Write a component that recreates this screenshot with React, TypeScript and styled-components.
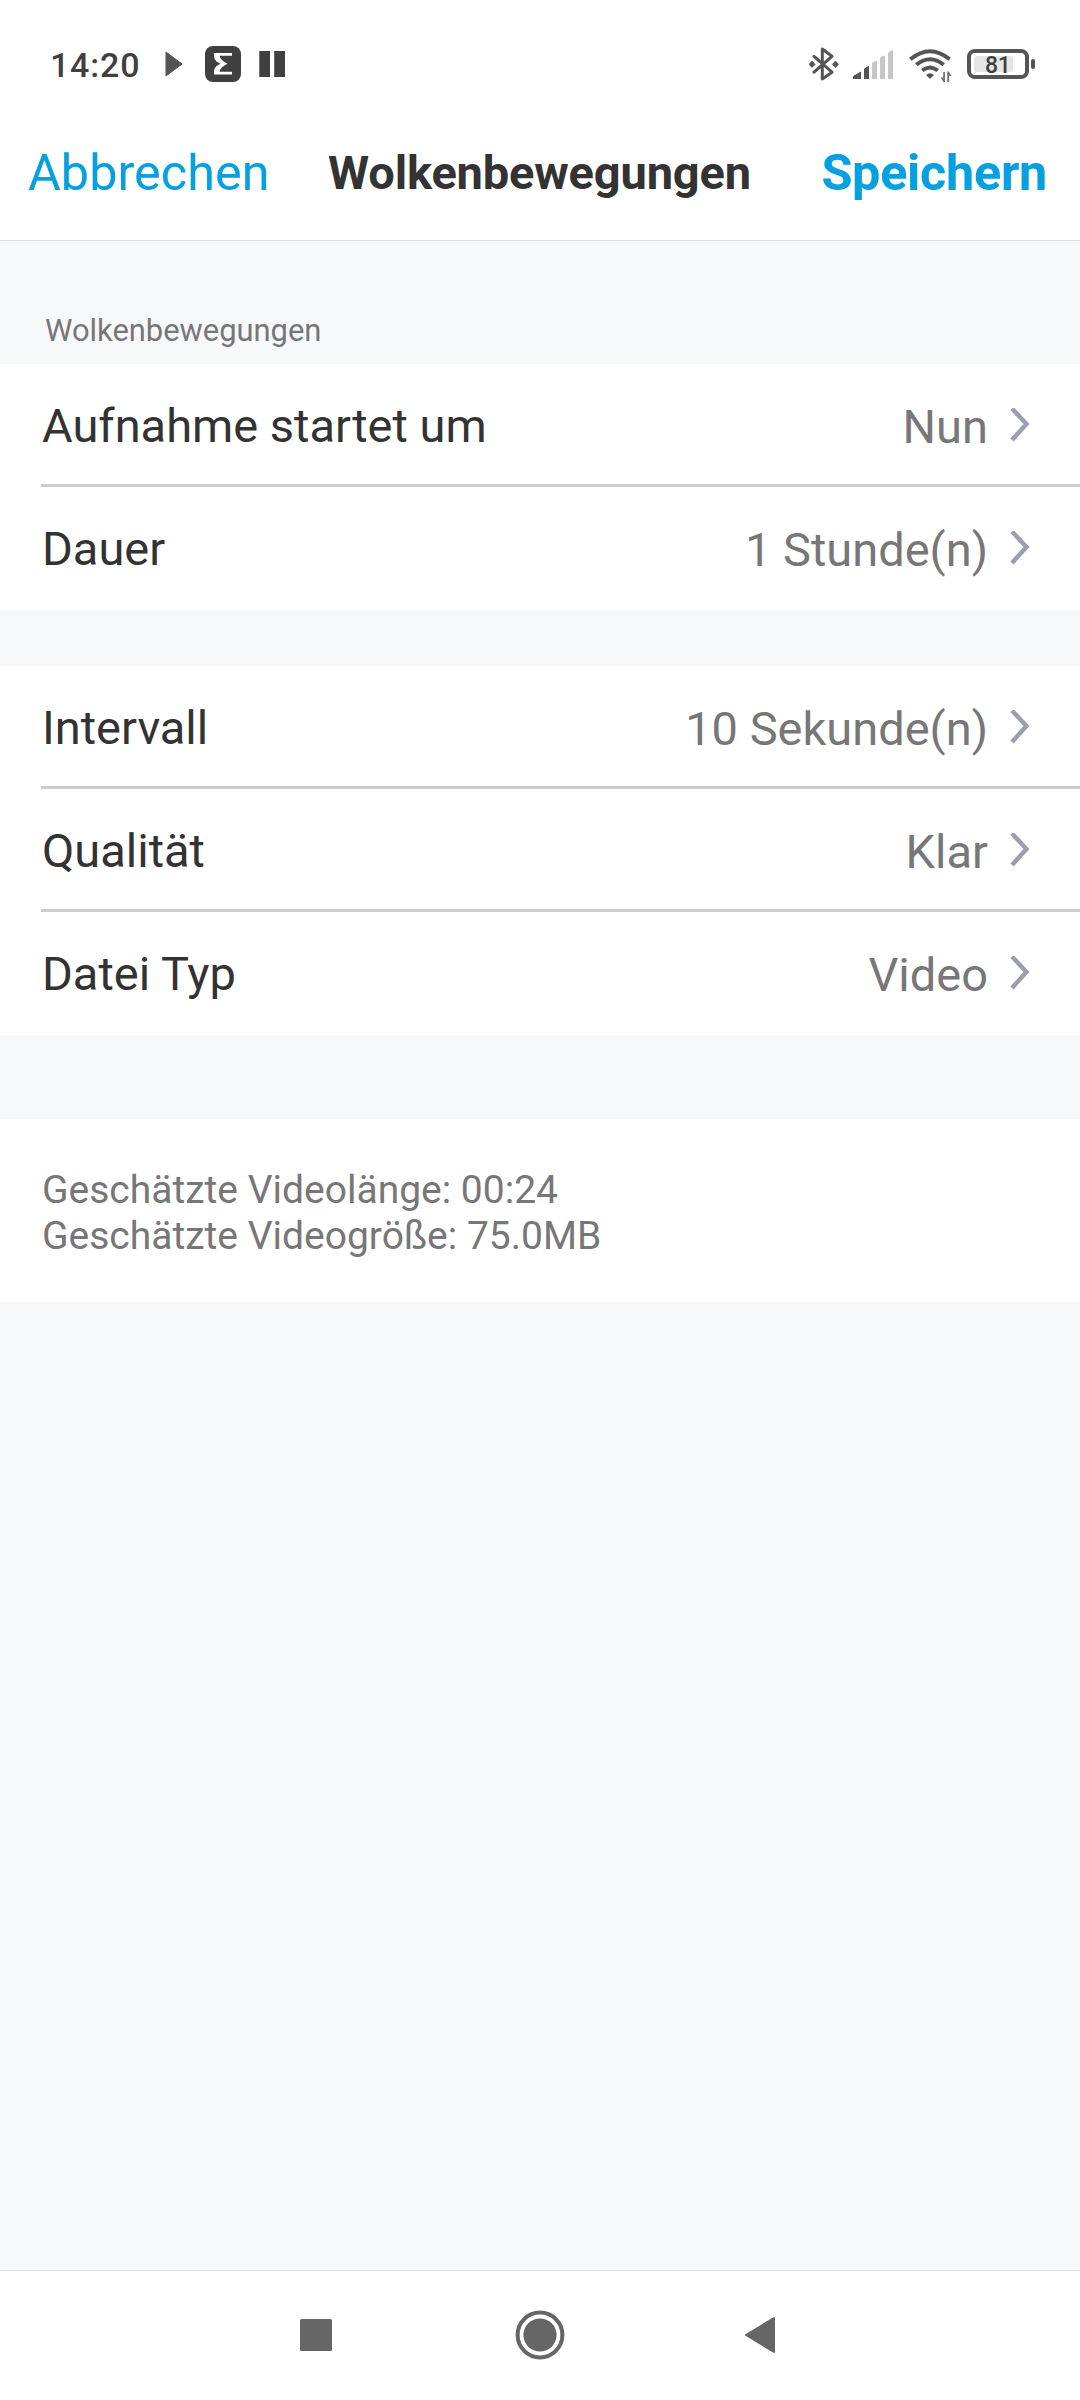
import React from "react";
import styled, { createGlobalStyle } from "styled-components";

const GlobalStyle = createGlobalStyle`
  * { box-sizing: border-box; }
  body { margin: 0; background: #f7f8fa; }
`;

const Screen = styled.div`
  width: 1080px;
  height: 2400px;
  display: flex;
  flex-direction: column;
  background: #f7f8fa;
  font-family: Roboto, "Liberation Sans", sans-serif;
  overflow: hidden;
`;

const StatusBar = styled.div`
  height: 107px;
  padding: 21px 45px 0 50px;
  display: flex;
  justify-content: space-between;
  align-items: center;
  background: #fff;
`;

const StatusGroup = styled.div`
  display: flex;
  align-items: center;
`;

const Clock = styled.span`
  width: 115px;
  font-size: 34px;
  line-height: 40px;
  font-weight: 500;
  letter-spacing: 0.8px;
  color: #404040;
  padding-top: 2px;
`;

const Icon = styled.svg<{ $gap?: number }>`
  display: block;
  flex: none;
  margin-left: ${(p) => p.$gap ?? 0}px;
`;

const TitleBar = styled.header`
  height: 134px;
  padding: 0 33px 2px 28px;
  display: grid;
  grid-template-columns: 1fr auto 1fr;
  align-items: center;
  background: #fff;
  border-bottom: 1px solid #dcdddf;
`;

const Action = styled.button<{ $strong?: boolean }>`
  border: 0;
  padding: 0;
  background: none;
  font-family: inherit;
  font-size: 50.4px;
  line-height: 60px;
  font-weight: ${(p) => (p.$strong ? 700 : 400)};
  letter-spacing: ${(p) => (p.$strong ? "-0.3px" : "0")};
  color: #069fe0;
  justify-self: ${(p) => (p.$strong ? "end" : "start")};
`;

const Title = styled.h1`
  margin: 0;
  padding-left: 4px;
  font-size: 47px;
  line-height: 60px;
  font-weight: 700;
  letter-spacing: -0.17px;
  color: #333;
`;

const SectionLabel = styled.h2`
  margin: 0;
  height: 123px;
  padding: 72px 0 0 45px;
  font-size: 30.9px;
  line-height: 36px;
  font-weight: 400;
  color: #777;
`;

const Group = styled.section<{ $gapAfter: number }>`
  background: #fff;
  margin-bottom: ${(p) => p.$gapAfter}px;
`;

const Row = styled.div`
  margin-left: 41px;
  height: 123px;
  padding: 4px 50px 0 1px;
  display: flex;
  align-items: center;
  border-bottom: 3px solid #ccc;
  &:last-child {
    border-bottom-color: transparent;
  }
`;

const Label = styled.span`
  flex: 1;
  font-size: 47px;
  line-height: 56px;
  color: #333;
`;

const Value = styled.span`
  font-size: 47px;
  line-height: 56px;
  padding-top: 2px;
  color: #777;
`;

const Estimate = styled.section`
  height: 183px;
  padding: 48px 42px 0;
  background: #fff;
  font-size: 39px;
  line-height: 46px;
  color: #777;
`;

const EstimateLine = styled.p`
  margin: 0;
`;

const NavBar = styled.nav`
  margin-top: auto;
  height: 130px;
  padding: 0 304px 1px 300px;
  display: flex;
  align-items: center;
  justify-content: space-between;
  background: #fff;
  border-top: 1px solid #dfe1e3;
`;

const Chevron = () => (
  <Icon width="20" height="36" viewBox="0 1 20 36" $gap={22}>
    <path d="M2 1.5 L16.5 17 L2 33" fill="none" stroke="#9a9eaf" strokeWidth="4.4" />
  </Icon>
);

const PlayIcon = () => (
  <Icon width="18" height="26" viewBox="0 0 18 26">
    <path d="M1 1 L17 13 L1 25 Z" fill="#555" stroke="#555" strokeLinejoin="round" />
  </Icon>
);

const SigmaIcon = () => (
  <Icon width="36" height="36" viewBox="0 0 36 36" $gap={22}>
    <rect width="36" height="36" rx="8" fill="#404040" />
    <path
      d="M9 7 H27 V9.8 H14.5 C15 13 18 15.5 22.5 17.8 C18 20 15 22.5 14.5 25.8 H27 V28.6 H9 V26 C9 22 11.5 19.5 15.5 17.8 C11.5 16 9 13.5 9 9.5 Z"
      fill="#fff"
    />
  </Icon>
);

const PauseIcon = () => (
  <Icon width="26" height="26" viewBox="0 0 26 26" $gap={18}>
    <path d="M0.3 0H11V26H0.3Z M15.2 0H26V26H15.2Z" fill="#404040" />
  </Icon>
);

const BluetoothIcon = () => (
  <Icon width="30" height="34" viewBox="0 0 30 34">
    <path
      d="M5 9.3 L23 25.2 L13.3 32 V2 L23 9.3 L5 25.2"
      fill="none"
      stroke="#555"
      strokeWidth="3"
      strokeLinecap="round"
      strokeLinejoin="round"
    />
    <path d="M3 14 L6 17.3 L3 20.5 L0 17.3Z M26.5 14 L29.5 17.3 L26.5 20.5 L23.5 17.3Z" fill="#555" stroke="#555" strokeWidth="0.8" />
  </Icon>
);

const SignalIcon = () => (
  <Icon width="40" height="29" viewBox="0 0 40 29" $gap={14}>
    <path d="M0 29V26.5Q0 26 1 25.4L8 21.6V29Z M11 29V19Q13 16.5 16 16V29Z" fill="#555" />
    <path d="M19 29V13Q21 11 24 10.8V29Z M27 29V8Q29 5.8 32 5.4V29Z M35 29V3Q37 0.5 40 0V29Z" fill="#c6c6c6" />
  </Icon>
);

const WifiIcon = () => (
  <Icon width="43" height="36" viewBox="0 -3 43 36" $gap={16}>
    <g fill="none" stroke="#555" strokeWidth="4">
      <path d="M1.3 10.3 Q21 -5.8 40.7 10.3" />
      <path d="M7.3 15.8 Q21 4.6 34.7 15.8" />
      <path d="M13.2 21.5 Q21 15.4 28.8 21.5" />
    </g>
    <path d="M17 26 Q21 22.4 25 26 L21 30Z" fill="#555" />
    <path d="M36 23 V33 H34.4 L31.6 28.6 H34.2 V23Z M38.2 33 V22.6 H39.8 L42.4 27 H40.2 V33Z" fill="#777" />
  </Icon>
);

const Battery = styled.div`
  width: 62px;
  height: 30px;
  margin-left: 15px;
  padding: 3px;
  border: 4px solid #555;
  border-radius: 8px;
`;

const BatteryLevel = styled.div`
  width: 39px;
  height: 16px;
  padding-left: 11px;
  border-radius: 2px;
  background: #e6e6e6;
  color: #404040;
  font-size: 23px;
  line-height: 19px;
  font-weight: 500;
  letter-spacing: -0.3px;
`;

const BatteryCap = styled.div`
  width: 4px;
  height: 10px;
  margin-left: 2px;
  border-radius: 2px;
  background: #555;
`;

const SquareIcon = () => (
  <Icon width="32" height="32" viewBox="0 0 32 32">
    <rect width="32" height="32" rx="1.5" fill="#666" />
  </Icon>
);

const HomeIcon = () => (
  <Icon width="50" height="50" viewBox="0 0 50 50" $gap={3}>
    <circle cx="25" cy="25" r="22.4" fill="none" stroke="#666" strokeWidth="4" />
    <circle cx="25" cy="25" r="16.6" fill="#666" />
  </Icon>
);

const BackIcon = () => (
  <Icon width="32" height="38" viewBox="0 0 32 38">
    <path d="M2 19 L30 2 V36 Z" fill="#666" stroke="#666" strokeWidth="2" strokeLinejoin="round" />
  </Icon>
);

const schedule = [
  { label: "Aufnahme startet um", value: "Nun" },
  { label: "Dauer", value: "1 Stunde(n)" },
];

const recording = [
  { label: "Intervall", value: "10 Sekunde(n)" },
  { label: "Qualität", value: "Klar" },
  { label: "Datei Typ", value: "Video" },
];

const SettingsGroup = ({ items, gapAfter }: { items: typeof schedule; gapAfter: number }) => (
  <Group $gapAfter={gapAfter}>
    {items.map((item) => (
      <Row key={item.label}>
        <Label>{item.label}</Label>
        <Value>{item.value}</Value>
        <Chevron />
      </Row>
    ))}
  </Group>
);

export default function App() {
  return (
    <Screen>
      <GlobalStyle />
      <StatusBar>
        <StatusGroup>
          <Clock>14:20</Clock>
          <PlayIcon />
          <SigmaIcon />
          <PauseIcon />
        </StatusGroup>
        <StatusGroup>
          <BluetoothIcon />
          <SignalIcon />
          <WifiIcon />
          <Battery>
            <BatteryLevel>81</BatteryLevel>
          </Battery>
          <BatteryCap />
        </StatusGroup>
      </StatusBar>
      <TitleBar>
        <Action>Abbrechen</Action>
        <Title>Wolkenbewegungen</Title>
        <Action $strong>Speichern</Action>
      </TitleBar>
      <SectionLabel>Wolkenbewegungen</SectionLabel>
      <SettingsGroup items={schedule} gapAfter={56} />
      <SettingsGroup items={recording} gapAfter={84} />
      <Estimate>
        <EstimateLine>Geschätzte Videolänge: 00:24</EstimateLine>
        <EstimateLine>Geschätzte Videogröße: 75.0MB</EstimateLine>
      </Estimate>
      <NavBar>
        <SquareIcon />
        <HomeIcon />
        <BackIcon />
      </NavBar>
    </Screen>
  );
}
